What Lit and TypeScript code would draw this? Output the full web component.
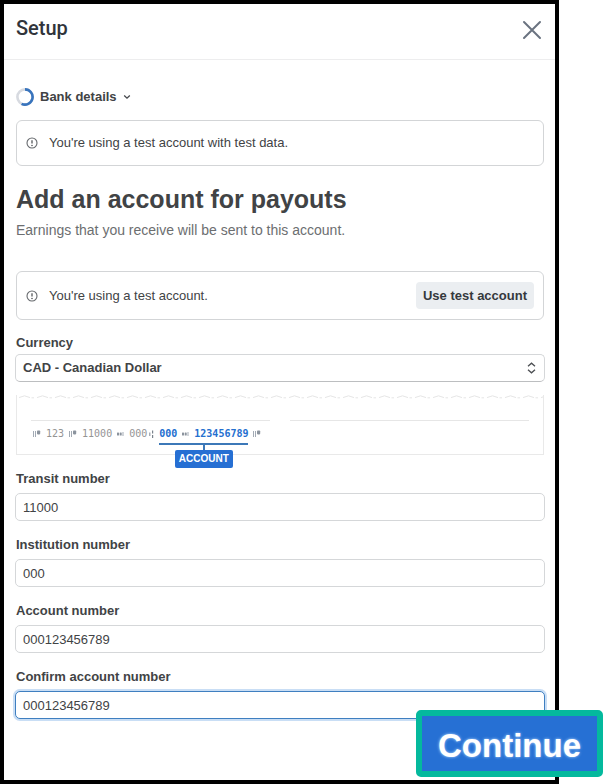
import { LitElement, html, css, svg } from "lit";
import { customElement, state } from "lit/decorators.js";

const infoIcon = html`<svg class="info" viewBox="0 0 12 12" width="12" height="12" aria-hidden="true">
  <circle cx="6" cy="6" r="5" fill="none" stroke="#66696d" stroke-width="1.1" />
  <path d="M6 3.2V6.6" stroke="#45484c" stroke-width="1.2" fill="none" />
  <circle cx="6" cy="8.4" r="0.75" fill="#45484c" />
</svg>`;

const onUs = svg`<path d="M0.5 2V8M2.5 2V8" stroke="#a3abb5" stroke-width="1" /><rect x="4" y="1.4" width="3.2" height="4" rx="0.8" fill="#8b939d" />`;
const dash = svg`<rect x="0" y="3.4" width="2" height="3.2" rx="0.6" fill="#8b939d" /><rect x="2.7" y="3.4" width="2" height="3.2" rx="0.6" fill="#8b939d" /><path d="M6 3V7" stroke="#a3abb5" stroke-width="1" />`;
const transit = svg`<path d="M0.8 3.5V7" stroke="#8b939d" stroke-width="1.1" /><path d="M3.6 1.5V4.5M3.6 6V9" stroke="#7b838d" stroke-width="1.2" />`;

@customElement("bank-cheque")
export class BankCheque extends LitElement {
  static styles = css`
    :host { display: block; }
    .cheque {
      margin: 0 1px;
      border: 1px solid #e9e9e9;
      border-top: 0;
      height: 60px;
      box-sizing: border-box;
    }
    .edge { display: block; width: 100%; height: 4px; }
    .rules { display: grid; grid-template-columns: 1fr 1fr; gap: 20px; padding: 21px 14px 0; }
    .rule { border-top: 1px solid #e6e6e6; }
    .micr {
      display: flex;
      align-items: center;
      gap: 5px;
      padding: 6px 0 0 16px;
      font: 10px/14px "DejaVu Sans Mono", monospace;
      color: #949494;
    }
    .pair { display: flex; align-items: center; gap: 2px; }
    .marked {
      position: relative;
      display: flex;
      align-items: center;
      gap: 5px;
      color: #256fcf;
      font-weight: bold;
    }
    .marker {
      position: absolute;
      top: 16px;
      left: 0;
      right: 0;
      display: flex;
      flex-direction: column;
      align-items: center;
      border-top: 2px solid #3c78b8;
    }
    .stem { width: 2px; height: 5px; background: #3c78b8; }
    .tag {
      padding: 0 4px;
      border-radius: 2px;
      background: #266fd3;
      color: #fff;
      font: bold 10px/18px "Liberation Sans", Arial, sans-serif;
    }
  `;

  private glyph(shape: unknown, width: number) {
    return html`<svg viewBox="0 0 ${width} 10" width=${width} height="10" fill="none" aria-hidden="true">${shape}</svg>`;
  }

  render() {
    return html`
      <div class="cheque">
        <svg class="edge" aria-hidden="true">
          <defs>
            <pattern id="torn" width="18" height="4" patternUnits="userSpaceOnUse">
              <path d="M2 2.6L7.5 0.8L13 2.6M14.5 2.8H17" fill="none" stroke="#dedede" stroke-width="0.8" />
            </pattern>
          </defs>
          <rect width="100%" height="4" fill="url(#torn)" />
        </svg>
        <div class="rules"><div class="rule"></div><div class="rule"></div></div>
        <div class="micr">
          ${this.glyph(onUs, 8)}<span>123</span>${this.glyph(onUs, 8)}<span>11000</span>${this.glyph(dash, 7)}
          <span class="pair"><span>000</span>${this.glyph(transit, 5)}</span>
          <span class="marked">
            <span>000</span>${this.glyph(dash, 7)}<span>123456789</span>
            <span class="marker"><span class="stem"></span><span class="tag">ACCOUNT</span></span>
          </span>
          ${this.glyph(onUs, 8)}
        </div>
      </div>
    `;
  }
}

@customElement("app-root")
export class AppRoot extends LitElement {
  static styles = css`
    :host {
      display: block;
      font: 13px/16px "Liberation Sans", Arial, sans-serif;
      color: #414345;
      background: #fff;
    }
    * { box-sizing: border-box; }
    button, input, select { font: inherit; color: inherit; margin: 0; }
    .page { position: relative; display: flex; min-height: 100vh; padding-right: 48px; }
    .panel { flex: 1; min-width: 0; border: 4px solid #000; }
    header {
      display: flex;
      align-items: center;
      justify-content: space-between;
      height: 56px;
      padding: 0 12px 4px;
      border-bottom: 1px solid #ededee;
    }
    .title { margin: 0; padding-bottom: 4px; font: 500 20px/24px Roboto, sans-serif; color: #30343b; }
    .close { display: grid; padding: 0; border: 0; background: none; cursor: pointer; }
    main { padding: 28px 10px 32px 11px; }
    .step {
      display: flex;
      align-items: center;
      gap: 6px;
      padding: 0 1px;
      border: 0;
      background: none;
      font-weight: bold;
      cursor: pointer;
    }
    .notice {
      display: flex;
      align-items: center;
      gap: 11px;
      min-height: 46px;
      margin: 14px 1px 0;
      padding: 0 9px;
      border: 1px solid #d3d5d7;
      border-radius: 6px;
    }
    .notice.action { min-height: 49px; margin-top: 32px; }
    .notice p { flex: 1; margin: 0; }
    .info { flex: none; }
    .secondary {
      height: 27px;
      padding: 0 7px;
      border: 0;
      border-radius: 4px;
      background: #ebeef1;
      color: #35383c;
      font-weight: bold;
      cursor: pointer;
    }
    h2 { margin: 17px 1px 0; font-size: 25px; line-height: 32px; }
    .lead { margin: 6px 1px 0; font-size: 14px; line-height: 18px; color: #6c6e70; }
    label { display: block; margin: 14px 1px 5px; font-weight: bold; line-height: 18px; }
    .top { margin-bottom: 2px; }
    .control { position: relative; }
    input, select {
      display: block;
      width: 100%;
      height: 28px;
      padding: 0 7px;
      border: 1px solid #d5d7d9;
      border-radius: 5px;
      background: #fff;
      outline: 0;
    }
    input { margin-bottom: 15px; }
    select { appearance: none; font-weight: bold; border-bottom-color: #bcbec0; }
    .arrows { position: absolute; right: 9px; top: 8px; pointer-events: none; }
    bank-cheque { margin: 13px 0 15px; }
    .focused { border-color: #3f7fc0; box-shadow: 0 0 0 2px #c9def5; }
    .continue {
      position: absolute;
      right: 4px;
      bottom: 7px;
      padding: 9px 16px 5px;
      border: 6px solid #04b99d;
      border-radius: 5px;
      background: #2670d4;
      color: #fff;
      font-size: 33px;
      line-height: 41px;
      font-weight: bold;
      text-shadow: 0 0 3px #b9dcff;
      cursor: pointer;
    }
  `;

  @state() private fields = [
    { id: "transit", label: "Transit number", value: "11000", focused: false },
    { id: "institution", label: "Institution number", value: "000", focused: false },
    { id: "account", label: "Account number", value: "000123456789", focused: false },
    { id: "confirm", label: "Confirm account number", value: "000123456789", focused: true },
  ];

  render() {
    return html`
      <div class="page">
        <section class="panel">
          <header>
            <h1 class="title">Setup</h1>
            <button class="close" aria-label="Close">
              <svg viewBox="0 0 22 22" width="22" height="22"><path d="M3 3L19 19M19 3L3 19" stroke="#6a7380" stroke-width="2" stroke-linecap="round" /></svg>
            </button>
          </header>
          <main>
            <button class="step">
              <svg viewBox="0 0 18 18" width="18" height="18" fill="none" stroke-width="2.6">
                <circle cx="9" cy="9" r="7.6" stroke="#d7dae0" />
                <path d="M9 1.4A7.6 7.6 0 1 1 5.6 15.8" stroke="#3874bd" />
              </svg>
              <span>Bank details</span>
              <svg viewBox="0 0 8 8" width="8" height="8"><path d="M1.2 2.5L4 5.2L6.8 2.5" fill="none" stroke="#45484c" stroke-width="1.3" /></svg>
            </button>
            <div class="notice">${infoIcon}<p>You're using a test account with test data.</p></div>
            <h2>Add an account for payouts</h2>
            <p class="lead">Earnings that you receive will be sent to this account.</p>
            <div class="notice action">
              ${infoIcon}<p>You're using a test account.</p>
              <button class="secondary">Use test account</button>
            </div>
            <label class="top" for="currency">Currency</label>
            <div class="control">
              <select id="currency"><option>CAD - Canadian Dollar</option></select>
              <svg class="arrows" viewBox="0 0 9 12" width="9" height="12" fill="none" stroke="#4b4e52" stroke-width="1.3"><path d="M1 4.2L4.5 1.2L8 4.2M1 7.8L4.5 10.8L8 7.8" /></svg>
            </div>
            <bank-cheque></bank-cheque>
            ${this.fields.map(
              (f) => html`<label for=${f.id}>${f.label}</label>
                <input id=${f.id} class=${f.focused ? "focused" : ""} inputmode="numeric" .value=${f.value} />`
            )}
          </main>
        </section>
        <button class="continue">Continue</button>
      </div>
    `;
  }
}
